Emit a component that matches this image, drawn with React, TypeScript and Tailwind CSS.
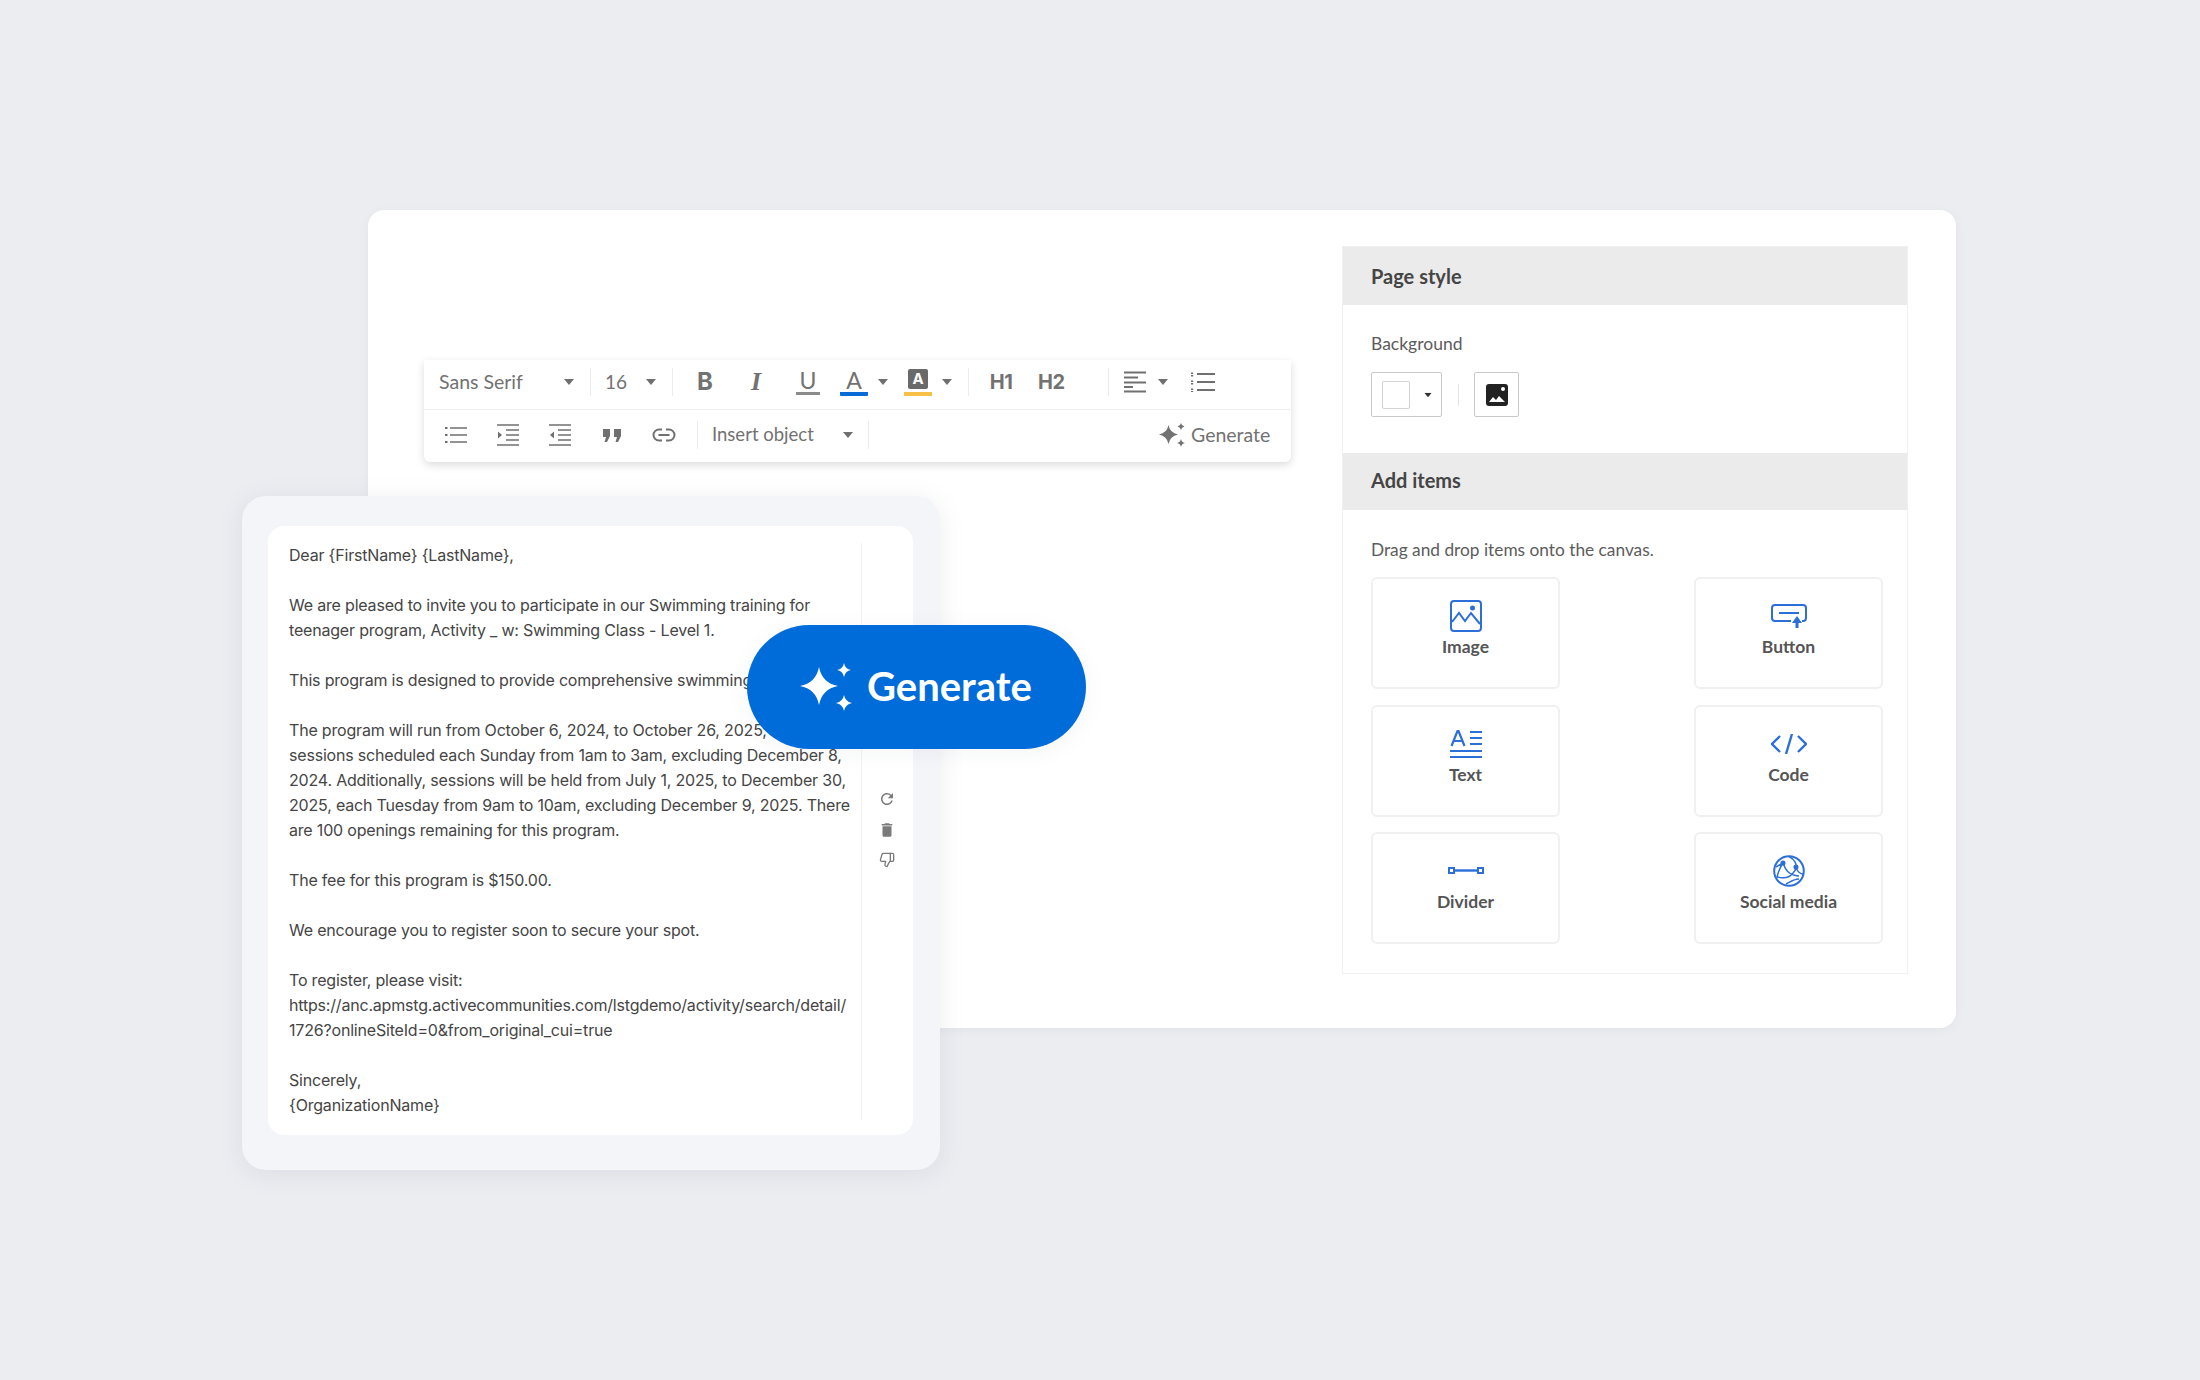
import { ThumbsDown } from "lucide-react";
import { MdDelete, MdRefresh } from "react-icons/md";

const emailLines = [
  "Dear {FirstName} {LastName},",
  "",
  "We are pleased to invite you to participate in our Swimming training for",
  "teenager program, Activity _ w: Swimming Class - Level 1.",
  "",
  "This program is designed to provide comprehensive swimming",
  "",
  "The program will run from October 6, 2024, to October 26, 2025,",
  "sessions scheduled each Sunday from 1am to 3am, excluding December 8,",
  "2024. Additionally, sessions will be held from July 1, 2025, to December 30,",
  "2025, each Tuesday from 9am to 10am, excluding December 9, 2025. There",
  "are 100 openings remaining for this program.",
  "",
  "The fee for this program is $150.00.",
  "",
  "We encourage you to register soon to secure your spot.",
  "",
  "To register, please visit:",
  "https://anc.apmstg.activecommunities.com/lstgdemo/activity/search/detail/",
  "1726?onlineSiteId=0&from_original_cui=true",
  "",
  "Sincerely,",
  "{OrganizationName}",
];

function star(x: number, y: number, r: number) {
  const k = r * 0.16;
  return `M${x} ${y - r}Q${x + k} ${y - k} ${x + r} ${y}Q${x + k} ${y + k} ${x} ${y + r}Q${x - k} ${y + k} ${x - r} ${y}Q${x - k} ${y - k} ${x} ${y - r}Z`;
}

function Sparkles({ className }: { className: string }) {
  return (
    <svg viewBox="0 0 52 48" className={className} fill="currentColor">
      <path d={star(19, 23, 19)} />
      <path d={star(44, 7, 7)} />
      <path d={star(44, 40, 8)} />
    </svg>
  );
}

function Caret({ className = "" }: { className?: string }) {
  return (
    <svg viewBox="0 0 10 6" className={`h-[6px] w-[10px] shrink-0 ${className}`} fill="#6f6f6f">
      <path d="M0 0h10L5 6z" />
    </svg>
  );
}

function Sep({ className = "" }: { className?: string }) {
  return <div className={`h-[28px] w-px shrink-0 bg-[#ececec] ${className}`} />;
}

function ListIcon() {
  return (
    <svg viewBox="0 0 24 24" className="ml-[20px] h-[24px] w-[24px]" stroke="#707070" strokeWidth="1.6" fill="none">
      <path d="M6 5h17M6 12h17M6 19h17" />
      <path d="M1 5h2.5M1 12h2.5M1 19h2.5" strokeWidth="2.2" />
    </svg>
  );
}

function IndentIcon({ flip, className }: { flip?: boolean; className: string }) {
  return (
    <svg viewBox="0 0 24 24" className={`h-[24px] w-[24px] ${className}`} stroke="#707070" strokeWidth="1.7" fill="none">
      <path d="M1 2h22M1 22h22M10 7h13M10 12h13M10 17h13" />
      <path d={flip ? "M6 8.5v7L2 12z" : "M2 8.5v7L6 12z"} fill="#707070" stroke="none" />
    </svg>
  );
}

function EditorToolbar() {
  return (
    <div className="mt-[150px] w-[867px] rounded-b-[6px] bg-white font-['Lato',sans-serif] text-[#727272] shadow-[0_3px_8px_rgba(0,0,0,0.14)]">
      <div className="flex h-[50px] items-center border-b border-[#f0f0f0] pb-[5px]">
        <div className="flex w-[166px] items-center justify-between pl-[15px] pr-[16px] text-[19.500px]">
          <span>Sans Serif</span>
          <Caret />
        </div>
        <Sep />
        <div className="flex w-[81px] items-center justify-between pl-[14px] pr-[16px] text-[19px]">
          <span>16</span>
          <Caret />
        </div>
        <Sep />
        <span className="ml-[20px] w-[24px] text-center font-['Inter',sans-serif] text-[24px] font-bold leading-none">B</span>
        <span className="ml-[27px] w-[24px] text-center font-['Liberation_Serif',serif] text-[26px] font-bold italic leading-none">I</span>
        <span className="ml-[28px] w-[24px] border-b-[3px] border-[#8a8a8a] text-center text-[23px] leading-[23px]">U</span>
        <div className="ml-[20px] w-[28px] rounded-[1px] border-b-[4px] border-[#0a6bd6] text-center text-[23px] leading-[23px]">A</div>
        <Caret className="ml-[10px]" />
        <div className="ml-[16px] flex h-[27px] w-[28px] justify-center border-b-[4px] border-[#f7c046]">
          <span className="h-[20px] w-[20px] rounded-[2px] bg-[#6a6a6a] text-center font-['Inter',sans-serif] text-[15px] font-bold leading-[20px] text-white">A</span>
        </div>
        <Caret className="ml-[10px]" />
        <Sep className="ml-[16px]" />
        <span className="ml-[21px] w-[24px] whitespace-nowrap text-center font-['Inter',sans-serif] text-[20px] font-bold leading-none tracking-[-0.5px] [text-indent:-2px]">H1</span>
        <span className="ml-[26px] w-[24px] whitespace-nowrap text-center font-['Inter',sans-serif] text-[20px] font-bold leading-none tracking-[-0.5px] [text-indent:-2px]">H2</span>
        <Sep className="ml-[44px]" />
        <svg viewBox="0 0 22 22" className="ml-[15px] h-[22px] w-[22px]" stroke="#707070" strokeWidth="2.2" fill="none">
          <path d="M0 1.5h22M0 6.5h14M0 11.5h22M0 16h9M0 20.5h22" />
        </svg>
        <Caret className="ml-[12px]" />
        <svg viewBox="0 0 24 20" className="ml-[23px] h-[20px] w-[24px]" stroke="#707070" strokeWidth="1.8" fill="none">
          <path d="M6 2h18M6 10h18M6 18h18" />
          <path d="M1 0.500v4M1 8.500v4M1 16.500v4" strokeWidth="2.400" strokeDasharray="1.5 1" />
        </svg>
      </div>
      <div className="flex h-[52px] items-center pb-[2px]">
        <ListIcon />
        <IndentIcon className="ml-[28px]" />
        <IndentIcon flip className="ml-[28px]" />
        <svg viewBox="0 0 24 24" className="ml-[28px] h-[24px] w-[24px]" fill="#707070">
          <path d="M3 6h7v7l-3 6H4.500l1.500-5H3zM14 6h7v7l-3 6h-2.500l1.500-5H14z" />
        </svg>
        <svg viewBox="0 0 24 24" className="ml-[28px] h-[24px] w-[24px]" stroke="#707070" strokeWidth="2" fill="none">
          <path d="M10 6.500H7a5.500 5.500 0 0 0 0 11h3M14 6.500h3a5.500 5.500 0 0 1 0 11h-3M6.500 12h11" />
        </svg>
        <Sep className="ml-[21px]" />
        <span className="ml-[14px] w-[104px] whitespace-nowrap text-[18.500px]">Insert object</span>
        <Caret className="ml-[27px]" />
        <Sep className="ml-[15px]" />
        <Sparkles className="ml-[290px] h-[24px] w-[26px]" />
        <span className="ml-[6px] text-[19.500px]">Generate</span>
      </div>
    </div>
  );
}

function ImageIcon() {
  return (
    <svg viewBox="0 0 32 32" className="h-[32px] w-[32px]" fill="none" stroke="#2c6fd8" strokeWidth="2">
      <rect x="1" y="1" width="30" height="30" rx="3" />
      <path d="M2 22l7-9 6 8 6-8 9 11" />
      <circle cx="22.500" cy="8" r="2.500" fill="#2c6fd8" stroke="none" />
    </svg>
  );
}

function ButtonIcon() {
  return (
    <svg viewBox="0 0 36 24" className="h-[24px] w-[36px]" fill="none" stroke="#2c6fd8" strokeWidth="2">
      <path d="M20 17H4a3 3 0 0 1-3-3V4a3 3 0 0 1 3-3h28a3 3 0 0 1 3 3v10a3 3 0 0 1-3 3h-1" />
      <path d="M8 9h20" />
      <path d="M26 12l5 7h-3.500v5h-3v-5H21z" fill="#2c6fd8" stroke="none" />
    </svg>
  );
}

function TextIcon() {
  return (
    <svg viewBox="0 0 32 28" className="h-[28px] w-[32px]" fill="none" stroke="#2c6fd8" strokeWidth="2.200">
      <path d="M1.500 16L7.500 1h1l6 15M4 11h9" />
      <path d="M20 2h12M20 8h12M20 14h12M0 21h32M0 27h32" />
    </svg>
  );
}

function CodeIcon() {
  return (
    <svg viewBox="0 0 36 20" className="h-[20px] w-[36px]" fill="none" stroke="#2c6fd8" strokeWidth="2.400">
      <path d="M9 2l-8 8 8 8M27 2l8 8-8 8M21 0l-6 20" />
    </svg>
  );
}

function DividerIcon() {
  return (
    <svg viewBox="0 0 36 8" className="h-[8px] w-[36px]" fill="none" stroke="#2c6fd8" strokeWidth="2">
      <rect x="1" y="1" width="5" height="5" />
      <rect x="30" y="1" width="5" height="5" />
      <path d="M6 3.500h24" strokeWidth="2.400" />
    </svg>
  );
}

function SocialIcon() {
  return (
    <svg viewBox="0 0 32 32" className="h-[32px] w-[32px]" fill="none" stroke="#2c6fd8" strokeWidth="1.500">
      <circle cx="16" cy="16" r="14.800" strokeWidth="2" />
      <path d="M3 12L10 8M10 8c-4 6-6 13-6 15M10 8c2 5 4 12 16 13M16 1.500c6 3 8 8 7 12-1 3-5 7-7 8-3 1.500-9 2-12 0M23 13c2 4 5 6 7 6M13 29c4-2 8-5 13-5" />
      <circle cx="10" cy="8" r="1.800" fill="#2c6fd8" />
      <circle cx="23" cy="12" r="1.800" fill="#2c6fd8" />
    </svg>
  );
}

const items = [
  { label: "Image", icon: <ImageIcon /> },
  { label: "Button", icon: <ButtonIcon /> },
  { label: "Text", icon: <TextIcon /> },
  { label: "Code", icon: <CodeIcon /> },
  { label: "Divider", icon: <DividerIcon /> },
  { label: "Social media", icon: <SocialIcon /> },
];

function SidePanel() {
  return (
    <div className="mt-[36px] h-[728px] w-[566px] border border-[#f0f0f0] font-['Lato',sans-serif]">
      <div className="flex h-[58px] items-center bg-[#ebebeb] pb-[1px] pl-[28px] text-[20px] font-bold text-[#454545]">Page style</div>
      <div className="h-[148px] px-[28px] pt-[28px]">
        <p className="text-[17.500px] leading-[22px] text-[#5c5c5c]">Background</p>
        <div className="mt-[17px] flex items-center">
          <div className="flex h-[45px] w-[71px] items-center rounded-[2px] border border-[#c9c9c9] pl-[10px]">
            <div className="h-[28px] w-[28px] rounded-[2px] border border-[#d4d4d4]" />
            <Caret className="ml-[13px] scale-75 [&>path]:fill-[#333]" />
          </div>
          <div className="ml-[16px] h-[22px] w-px bg-[#e6e6e6]" />
          <div className="ml-[15px] flex h-[45px] w-[45px] items-center justify-center rounded-[2px] border border-[#c9c9c9]">
            <svg viewBox="0 0 22 22" className="h-[22px] w-[22px]">
              <rect width="22" height="22" rx="3" fill="#222" />
              <path d="M3 18l4-5 3 3 3-4 6 6z" fill="#fff" />
              <circle cx="17" cy="5" r="2" fill="#fff" />
            </svg>
          </div>
        </div>
      </div>
      <div className="flex h-[57px] items-center bg-[#ebebeb] pb-[3px] pl-[28px] text-[20px] font-bold text-[#454545]">Add items</div>
      <div className="pl-[28px] pr-[24px] pt-[29px]">
        <p className="text-[17.300px] leading-[22px] text-[#5c5c5c]">Drag and drop items onto the canvas.</p>
        <div className="mt-[16px] grid grid-cols-[189px_189px] justify-between gap-y-[15.500px]">
          {items.map((item) => (
            <div key={item.label} className="flex h-[112px] flex-col items-center rounded-[6px] border-2 border-[#f0f0f0]">
              <div className="flex h-[54px] items-end justify-center pb-[1px]">
                <div className="flex h-[32px] items-center">{item.icon}</div>
              </div>
              <span className="mt-[3px] text-[17.500px] font-bold leading-[22px] text-[#555555]">{item.label}</span>
            </div>
          ))}
        </div>
      </div>
    </div>
  );
}

function EmailCard() {
  return (
    <div className="absolute left-[242px] top-[496px] h-[674px] w-[698px] rounded-[24px] bg-[#f4f5f9] px-[26px] pt-[30px] shadow-[0_4px_24px_rgba(120,125,140,0.14)]">
      <div className="flex h-[609px] w-[645px] rounded-[16px] bg-white pb-[15px] pl-[21px] pt-[17px]">
        <div className="w-[573px] border-r border-[#f2f2f2] font-['Inter',sans-serif] text-[16px] leading-[25px] tracking-[-0.19px] text-[#454545]">
          {emailLines.map((line, i) => (
            <p key={i} className="h-[25px] whitespace-nowrap">{line}</p>
          ))}
        </div>
        <div className="flex w-[50px] flex-col items-center gap-[13px] pt-[247px] text-[#7a7a7a]">
          <MdRefresh size={18} />
          <MdDelete size={18} />
          <ThumbsDown size={16} strokeWidth={2} />
        </div>
      </div>
    </div>
  );
}

export default function App() {
  return (
    <div className="relative h-[1380px] w-[2200px] overflow-hidden bg-[#ecedf1] pl-[368px] pt-[210px]">
      <div className="flex h-[818px] w-[1588px] items-start justify-between rounded-[16px] bg-white pl-[56px] pr-[48px] shadow-[0_2px_10px_rgba(120,125,140,0.08)]">
        <EditorToolbar />
        <SidePanel />
      </div>
      <EmailCard />
      <div className="absolute left-[747px] top-[625px] flex h-[124px] w-[339px] items-center rounded-full bg-[#006cd9] pl-[53px] font-['Lato',sans-serif] text-white shadow-[0_4px_20px_rgba(120,125,140,0.08)]">
        <Sparkles className="h-[48px] w-[52px]" />
        <span className="mb-[2px] ml-[15px] text-[40px] font-bold leading-none">Generate</span>
      </div>
    </div>
  );
}
